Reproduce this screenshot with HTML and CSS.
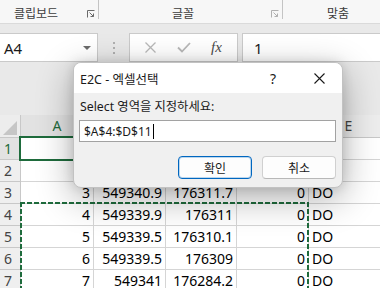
FILE: index.html
```html
<!DOCTYPE html>
<html>
<head>
  <title>E2C - 엑셀선택</title>
  <link rel="stylesheet" href="styles.css">
</head>
<body>
  <!-- Ribbon group labels -->
  <div class="ribbon">
    <div class="group group-clip">
      <span class="group-label">클립보드</span>
      <svg class="launcher" width="8" height="8" viewBox="0 0 8 8"><path d="M0.5 7.5V0.5H7.5" fill="none" stroke="#6a6a6a"/><path d="M2.5 2.5L6.5 6.5M6.5 3.5V6.5H3.5" fill="none" stroke="#6a6a6a"/></svg>
    </div>
    <div class="group group-font">
      <span class="group-label">글꼴</span>
      <svg class="launcher" width="8" height="8" viewBox="0 0 8 8"><path d="M0.5 7.5V0.5H7.5" fill="none" stroke="#b0b0b0"/><path d="M2.5 2.5L6.5 6.5M6.5 3.5V6.5H3.5" fill="none" stroke="#b0b0b0"/></svg>
    </div>
    <div class="group group-align">
      <span class="group-label">맞춤</span>
    </div>
  </div>

  <!-- Formula bar -->
  <div class="formula-bar">
    <div class="name-box">
      <span class="name-value">A4</span>
      <svg width="8" height="4" viewBox="0 0 8 4"><path d="M0 0H8L4 4Z" fill="#6b6b6b"/></svg>
    </div>
    <div class="grip">
      <svg width="2" height="12" viewBox="0 0 2 12"><rect y="0" width="2" height="2" fill="#b0b0b0"/><rect y="5" width="2" height="2" fill="#b0b0b0"/><rect y="10" width="2" height="2" fill="#b0b0b0"/></svg>
    </div>
    <div class="fx-box">
      <span class="fx-slot"><svg width="11" height="11" viewBox="0 0 11 11"><path d="M0.5 0.5L10.5 10.5M10.5 0.5L0.5 10.5" stroke="#b8b8b8" stroke-width="1.3"/></svg></span>
      <span class="fx-slot"><svg width="14" height="11" viewBox="0 0 14 11"><path d="M1 5.5L5 9.5L13 1" fill="none" stroke="#b8b8b8" stroke-width="1.8"/></svg></span>
      <span class="fx-slot fx-text">fx</span>
    </div>
    <div class="formula-input">1</div>
  </div>

  <!-- Sheet grid -->
  <div class="sheet">
    <div class="cell hdr corner"><svg width="14" height="14" viewBox="0 0 14 14"><path d="M14 0V14H0Z" fill="#c6c6c6"/></svg></div>
    <div class="cell hdr sel">A</div>
    <div class="cell hdr">B</div>
    <div class="cell hdr">C</div>
    <div class="cell hdr">D</div>
    <div class="cell hdr">E</div>

    <div class="cell row-hdr sel">1</div>
    <div class="cell"></div><div class="cell"></div><div class="cell"></div><div class="cell"></div><div class="cell"></div>

    <div class="cell row-hdr">2</div>
    <div class="cell"></div><div class="cell"></div><div class="cell"></div><div class="cell"></div><div class="cell"></div>

    <div class="cell row-hdr">3</div>
    <div class="cell num">3</div><div class="cell num">549340.9</div><div class="cell num">176311.7</div><div class="cell num">0</div><div class="cell">DO</div>

    <div class="cell row-hdr">4</div>
    <div class="cell num">4</div><div class="cell num">549339.9</div><div class="cell num">176311</div><div class="cell num">0</div><div class="cell">DO</div>

    <div class="cell row-hdr">5</div>
    <div class="cell num">5</div><div class="cell num">549339.5</div><div class="cell num">176310.1</div><div class="cell num">0</div><div class="cell">DO</div>

    <div class="cell row-hdr">6</div>
    <div class="cell num">6</div><div class="cell num">549339.5</div><div class="cell num">176309</div><div class="cell num">0</div><div class="cell">DO</div>

    <div class="cell row-hdr">7</div>
    <div class="cell num">7</div><div class="cell num">549341</div><div class="cell num">176284.2</div><div class="cell num">0</div><div class="cell">DO</div>
  </div>

  <!-- Active cell and copy marquee lie over the grid -->
  <div class="active-cell"></div>
  <div class="marquee"></div>

  <!-- Dialog -->
  <div class="dialog">
    <div class="dialog-title">
      <span class="title-text">E2C - 엑셀선택</span>
      <span class="title-btn">?</span>
      <span class="title-btn"><svg width="11" height="11" viewBox="0 0 11 11"><path d="M0.5 0.5L10.5 10.5M10.5 0.5L0.5 10.5" stroke="#1a1a1a" stroke-width="1.1"/></svg></span>
    </div>
    <div class="dialog-body">
      <div class="prompt">Select 영역을 지정하세요:</div>
      <div class="range-input"><span class="range-value">$A$4:$D$11</span></div>
      <div class="buttons">
        <button class="btn btn-primary">확인</button>
        <button class="btn">취소</button>
      </div>
    </div>
  </div>
</body>
</html>
```

FILE: styles.css
```css
body {
  margin: 0;
  width: 380px;
  height: 288px;
  overflow: hidden;
  position: relative;
  background-color: #e9e9e9;
  font-family: "Noto Sans", "Noto Sans CJK KR", sans-serif;
  color: #1a1a1a;
}

/* Ribbon */
.ribbon {
  display: flex;
  height: 23px;
  background-color: #f7f7f7;
  border-bottom: 1px solid #dadada;
}

.group {
  display: flex;
  align-items: flex-start;
  height: 19px;
  box-sizing: border-box;
  border-right: 1px solid #c4c4c4;
}

.group-label {
  font-family: "Noto Sans CJK KR", sans-serif;
  font-size: 12px;
  line-height: 16px;
  padding-top: 5px;
  color: #3c3c3c;
}

.launcher {
  margin-top: 10px;
  margin-right: 3px;
}

.group-clip {
  width: 99px;
  padding-left: 14px;
}

.group-clip .launcher {
  margin-left: auto;
}

.group-font {
  width: 184px;
}

.group-font .group-label {
  flex: 1;
  text-align: center;
  padding-right: 4px;
}

.group-align {
  flex: 1;
  border-right: none;
  padding-left: 44px;
}

/* Formula bar */
.formula-bar {
  display: flex;
  height: 29px;
  padding-top: 9px;
}

.name-box {
  width: 98px;
  box-sizing: border-box;
  display: flex;
  align-items: center;
  padding: 0 6px 0 4px;
  background-color: #fff;
  border: 1px solid #cacaca;
  border-left: none;
}

.name-value {
  flex: 1;
  font-size: 15px;
}

.grip {
  width: 31px;
  display: flex;
  justify-content: center;
  align-items: center;
}

.fx-box {
  width: 109px;
  box-sizing: border-box;
  display: flex;
  padding-left: 4px;
  background-color: #fff;
  border: 1px solid #cacaca;
}

.fx-slot {
  width: 33px;
  display: flex;
  justify-content: center;
  align-items: center;
}

.fx-text {
  font-family: "Liberation Serif", serif;
  font-style: italic;
  font-size: 15px;
  color: #4a4a4a;
}

.formula-input {
  flex: 1;
  margin-left: 4px;
  display: flex;
  align-items: center;
  padding-left: 11px;
  font-size: 15px;
  background-color: #fff;
  border: 1px solid #cacaca;
  border-right: none;
}

/* Sheet */
.sheet {
  display: grid;
  grid-template-columns: 21px 73px 72px 71px 72px 80px;
  grid-template-rows: 23px repeat(7, 22px);
  margin-top: 53px;
}

.cell {
  box-sizing: border-box;
  border-right: 1px solid #d5d5d5;
  border-bottom: 1px solid #d5d5d5;
  background-color: #fff;
  font-size: 14px;
  line-height: 21px;
  padding: 0 3px;
  white-space: nowrap;
  overflow: hidden;
  color: #000;
}

.num {
  text-align: right;
}

.hdr {
  background-color: #ededed;
  border-color: #c8c8c8;
  color: #444;
  text-align: center;
  line-height: 22px;
}

.hdr.sel {
  background-color: #e2e2e2;
  color: #1e6b3c;
}

.corner {
  display: flex;
  justify-content: flex-end;
  align-items: flex-end;
  padding: 0 3px 2px 0;
}

.row-hdr {
  background-color: #efefef;
  border-color: #c8c8c8;
  color: #444;
  padding-left: 4px;
}

.row-hdr.sel {
  color: #1e6b3c;
  background-color: #e2e2e2;
}

.active-cell {
  position: absolute;
  left: 19px;
  top: 136px;
  width: 76px;
  height: 25px;
  box-sizing: border-box;
  border: 2px solid #1e6b3c;
}

.marquee {
  position: absolute;
  left: 20px;
  top: 202px;
  width: 289px;
  height: 100px;
  background:
    repeating-linear-gradient(90deg, #1e6b3c 0 5px, transparent 5px 7px) left top / 100% 2px no-repeat,
    repeating-linear-gradient(180deg, #1e6b3c 0 5px, transparent 5px 7px) left top / 2px 100% no-repeat,
    repeating-linear-gradient(180deg, #1e6b3c 0 5px, transparent 5px 7px) right top / 2px 100% no-repeat;
}

/* Dialog */
.dialog {
  position: absolute;
  left: 73px;
  top: 62px;
  width: 270px;
  height: 126px;
  box-sizing: border-box;
  display: flex;
  flex-direction: column;
  border: 1px solid #c2c2c2;
  border-radius: 8px;
  overflow: hidden;
  background-color: #f0f0f0;
  box-shadow: 0 10px 36px rgba(0, 0, 0, 0.32), 0 0 12px rgba(0, 0, 0, 0.12);
  font-family: "Noto Sans", "Noto Sans CJK KR", sans-serif;
  font-size: 12px;
}

.dialog-title {
  display: flex;
  align-items: center;
  height: 30px;
  background-color: #fff;
}

.title-text {
  flex: 1;
  padding-left: 6px;
  font-size: 12.5px;
}

.title-btn {
  width: 46px;
  display: flex;
  justify-content: center;
  align-items: center;
  font-size: 14px;
}

.dialog-body {
  flex: 1;
  padding: 6px 6px 0 5px;
}

.prompt {
  line-height: 16px;
  padding-left: 1px;
  font-size: 12.3px;
}

.range-input {
  margin-top: 5px;
  height: 22px;
  box-sizing: border-box;
  display: flex;
  align-items: center;
  padding-left: 4px;
  background-color: #fff;
  border: 1px solid #a2a2a2;
  font-size: 12px;
}

.range-value {
  border-right: 1px solid #000;
  padding-right: 1px;
  line-height: 15px;
}

.buttons {
  display: flex;
  justify-content: flex-end;
  gap: 10px;
  margin-top: 14px;
}

.btn {
  width: 74px;
  height: 23px;
  padding: 0;
  font-family: "Noto Sans CJK KR", sans-serif;
  font-size: 12px;
  color: #1a1a1a;
  background-color: #fdfdfd;
  border: 1px solid #d0d0d0;
  border-bottom-color: #b8b8b8;
  border-radius: 4px;
}

.btn-primary {
  border: 1px solid #0067c0;
  box-shadow: inset 0 0 0 1px rgba(0, 103, 192, 0.25);
}
```
